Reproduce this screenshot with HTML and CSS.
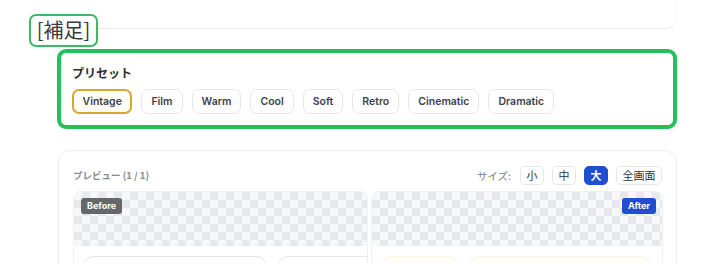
FILE: index.html
```html
<!DOCTYPE html>
<html lang="ja">
<head>
<meta charset="utf-8">
<link rel="stylesheet" href="styles.css">
</head>
<body>
<div class="viewport">
  <div class="card-above"></div>
  <div class="note">[補足]</div>

  <section class="presets">
    <h3 class="presets-title">プリセット</h3>
    <div class="preset-row">
      <button class="chip chip-active">Vintage</button>
      <button class="chip">Film</button>
      <button class="chip">Warm</button>
      <button class="chip">Cool</button>
      <button class="chip">Soft</button>
      <button class="chip">Retro</button>
      <button class="chip">Cinematic</button>
      <button class="chip">Dramatic</button>
    </div>
  </section>

  <section class="preview">
    <div class="preview-head">
      <span class="preview-title">プレビュー (1 / 1)</span>
      <div class="size-ctrl">
        <span class="size-label">サイズ:</span>
        <button class="size-btn">小</button>
        <button class="size-btn">中</button>
        <button class="size-btn size-on">大</button>
        <button class="size-btn">全画面</button>
      </div>
    </div>
    <div class="compare">
      <div class="pane pane-before">
        <div class="checker"><span class="badge badge-before">Before</span></div>
        <div class="pane-body">
          <div class="thumb thumb-a"></div>
          <div class="thumb thumb-b"></div>
        </div>
      </div>
      <div class="pane pane-after">
        <div class="checker"><span class="badge badge-after">After</span></div>
        <div class="pane-body">
          <div class="thumb thumb-c"></div>
          <div class="thumb thumb-d"></div>
        </div>
      </div>
    </div>
  </section>
</div>
</body>
</html>
```

FILE: styles.css
```css
* { box-sizing: border-box; }
html, body { margin: 0; padding: 0; background: #fff; }
body {
  font-family: "Inter", "Noto Sans CJK JP", sans-serif;
  color: #333;
}
.viewport {
  position: relative;
  width: 720px;
  height: 263px;
  overflow: hidden;
}
.card-above {
  height: 30px;
  margin: -1px 43px 0 58px;
  border-bottom: 1.5px solid #ececec;
  border-right: 1px solid #fafafa;
  border-radius: 0 0 10px 0;
}
.note {
  position: absolute;
  left: 29px;
  top: 14px;
  width: 69px;
  height: 33px;
  border: 2px solid #3cb866;
  border-radius: 7px;
  background: #fff;
  font-family: "Noto Sans CJK JP", sans-serif;
  font-size: 20px;
  font-weight: 400;
  line-height: 28px;
  color: #3a3a3a;
  text-align: center;
}
.presets {
  margin: 20px 43px 0 57px;
  height: 80px;
  border: 4px solid #25c05a;
  border-radius: 9px;
  padding: 11px 11px 0 11px;
}
.presets-title {
  margin: 0;
  font-size: 12px;
  font-weight: 700;
  line-height: 18px;
  color: #2f2f33;
  font-family: "Noto Sans CJK JP", sans-serif;
}
.preset-row {
  display: flex;
  gap: 9px;
  margin-top: 7px;
}
.chip {
  height: 25px;
  padding: 0 9px;
  border: 1px solid #e6e7ea;
  border-radius: 7px;
  background: #fff;
  font-family: "Inter", sans-serif;
  font-size: 10.5px;
  font-weight: 600;
  color: #3d4250;
}
.chip-active {
  border: 2px solid #d9a634;
  background: #fffdf6;
  padding: 0 8.5px;
}
.preview {
  margin: 21px 43px 0 58px;
  height: 140px;
  border: 1px solid #ececec;
  border-radius: 12px;
  padding: 14px 14px 0 14px;
}
.preview-head {
  display: flex;
  justify-content: space-between;
  align-items: center;
  height: 20px;
}
.preview-title {
  font-family: "Noto Sans CJK JP", sans-serif;
  font-size: 9.5px;
  font-weight: 700;
  color: #8a8a8e;
}
.size-ctrl {
  display: flex;
  align-items: center;
  gap: 8px;
}
.size-label {
  font-family: "Noto Sans CJK JP", sans-serif;
  font-size: 10.5px;
  color: #7c7c80;
  margin-right: 1px;
}
.size-btn {
  height: 19px;
  padding: 0 5.5px;
  border: 1px solid #e6e7ea;
  border-radius: 5px;
  background: #fff;
  font-family: "Noto Sans CJK JP", sans-serif;
  font-size: 11px;
  line-height: 17px;
  color: #333;
}
.size-on {
  background: #1f4fd0;
  border-color: #1f4fd0;
  color: #fff;
  font-weight: 700;
}
.compare {
  display: flex;
  gap: 3px;
  margin-top: 6px;
}
.pane {
  flex: 0 0 auto;
  border: 1px solid #eef0f2;
  border-bottom: none;
  border-radius: 8px 8px 0 0;
  overflow: hidden;
  height: 80px;
}
.pane-before { width: 295px; }
.pane-after { width: 292px; }
.checker {
  position: relative;
  height: 54px;
  background-color: #f6f7f9;
  background-image: conic-gradient(#e6e8eb 25%, transparent 0 50%, #e6e8eb 0 75%, transparent 0);
  background-size: 16px 16px;
}
.badge {
  position: absolute;
  top: 6px;
  height: 16px;
  padding: 0 6px;
  border-radius: 3px;
  font-family: "Inter", sans-serif;
  font-size: 9px;
  font-weight: 700;
  line-height: 16px;
  color: #fff;
}
.badge-before { left: 7px; background: #666769; }
.badge-after { right: 6px; background: #1f4fd0; }
.pane-body {
  display: flex;
  gap: 12px;
  padding: 10px 10px 0 10px;
}
.thumb {
  height: 20px;
  border: 1px solid #e3e6ee;
  border-radius: 9px;
  flex: 0 0 auto;
}
.thumb-a { width: 182px; border-color: #dfe3ee; }
.thumb-b { width: 100px; border-color: #e8e8ea; }
.thumb-c { width: 76px; border-color: #fbf6e2; background: #fffef8; }
.thumb-d { width: 180px; border-color: #f6f3e6; background: #fffefa; }
```
